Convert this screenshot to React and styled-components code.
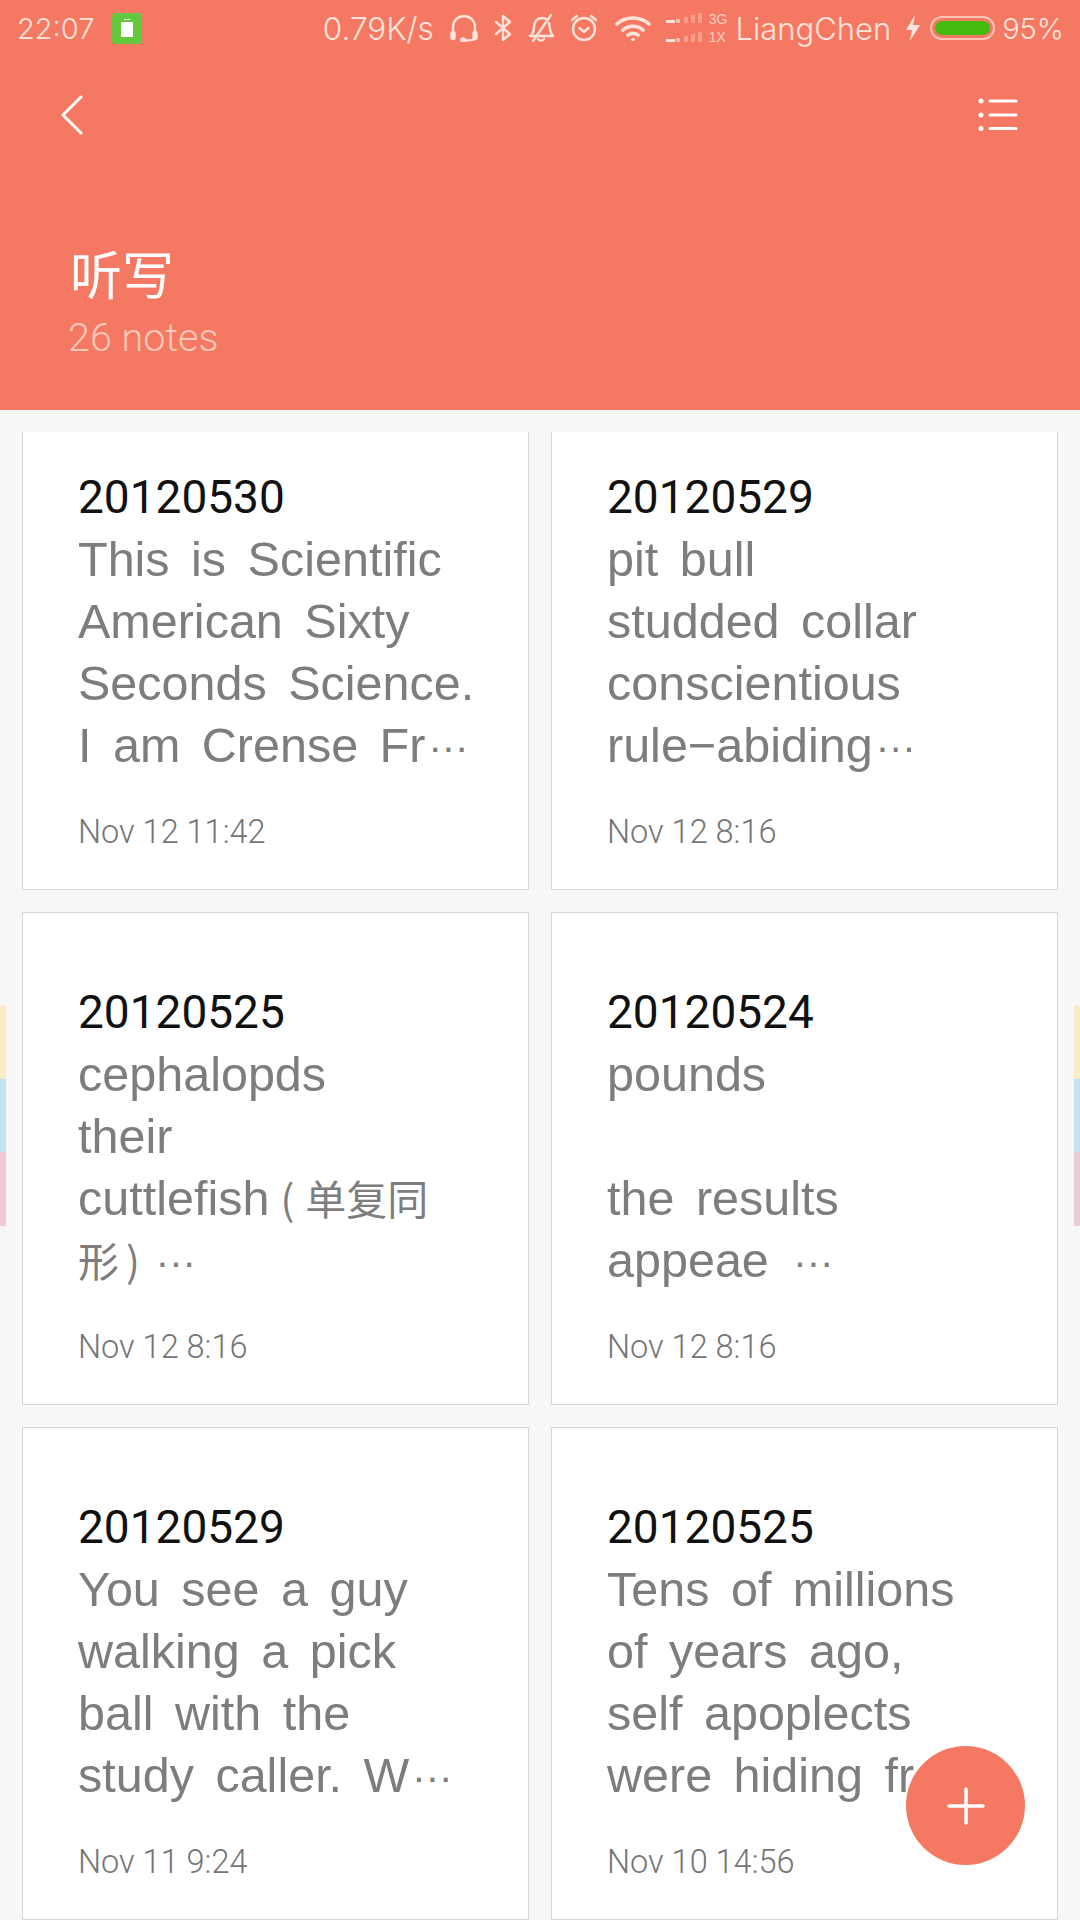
import React from 'react';
import styled, { createGlobalStyle } from 'styled-components';

const Global = createGlobalStyle`
  html, body { margin: 0; padding: 0; background: #f7f7f7; }
  #root { width: 1080px; height: 1920px; overflow: hidden; }
`;
const Page = styled.div`position: relative; width: 1080px; height: 1920px; overflow: hidden; background: #f7f7f7; font-family: "Liberation Sans", "Noto Sans CJK SC", sans-serif;`;
const Header = styled.header`height: 410px; background: #f57962; display: flex; flex-direction: column;`;
const StatusBar = styled.div`height: 56px; display: flex; align-items: center; padding: 0 16px 0 17px; color: #fde3dc; font-family: Inter, "Liberation Sans", sans-serif; font-size: 29px; font-weight: 300; white-space: nowrap;`;
const Time = styled.span`width: 95px;`;
const ChargeBadge = styled.span`width: 30px; height: 31px; background: #64c83c; border-radius: 4px; display: flex; align-items: center; justify-content: center;`;
const ChargeCell = styled.span`position: relative; width: 12px; height: 15px; margin-top: 3px; background: #fff; border-radius: 1px;
  &::before { content: ""; position: absolute; left: 3px; right: 3px; top: -3px; height: 1px; background: #fff; }
`;
const Spacer = styled.span`flex: 1;`;
const StatusItem = styled.span`display: flex; align-items: center; margin-left: ${p => p.$gap || 0}px; font-size: ${p => p.$size || 29}px;`;
const NetType = styled.span`display: flex; flex-direction: column; font-size: 14px; line-height: 18px; margin-left: 3px; color: #fbcdc1; font-family: "Liberation Sans", sans-serif;`;
const BatteryShell = styled.span`width: 65px; height: 24px; box-sizing: border-box; border: 2px solid #fcc4b7; border-radius: 12px; padding: 3px; display: flex;`;
const BatteryFill = styled.span`flex: 1; background: #45bb0f; border-radius: 8px;`;
const NavRow = styled.div`display: flex; justify-content: space-between; align-items: center; height: 118px; padding: 0 62px 0 60px; box-sizing: border-box;`;
const TitleBlock = styled.div`padding: 69px 0 0 68px; color: #fff;`;
const Title = styled.h1`margin: 0 0 13px 2px; font-size: 52px; line-height: 60px; font-weight: 400; font-family: "Noto Sans CJK SC", sans-serif;`;
const Count = styled.div`font-family: Roboto, sans-serif; font-weight: 300; font-size: 39.5px; line-height: 44px; color: #fcc8bb;`;
const Viewport = styled.main`margin-top: 22px; height: 1488px; overflow: hidden; padding: 0 22px;`;
const Grid = styled.div`display: grid; grid-template-columns: 507px 507px; column-gap: 22px; row-gap: 22px; margin-top: -35px;`;
const Card = styled.article`height: 493px; box-sizing: border-box; background: #fff; border: 1px solid #d6d6d6; padding: 68px 30px 0 55px; display: flex; flex-direction: column;`;
const NoteTitle = styled.div`font-family: Roboto, sans-serif; font-size: 46px; line-height: 62px; color: #111;`;
const NoteBody = styled.div`font-size: 48.5px; line-height: 62px; color: #7d7d7d; height: 248px; white-space: pre; word-spacing: 8px;`;
const Cjk = styled.span`font-family: "Noto Sans CJK SC", sans-serif; font-size: 41px; line-height: 0;`;
const Paren = styled.span`font-family: "Noto Sans CJK SC", sans-serif; font-size: 41px; line-height: 0; margin: ${p => (p.$open ? '0 11px' : '0 13px 0 7px')};`;
const Dots = styled.span`margin-left: 3px; font-size: 40px; vertical-align: 1px;`;
const NoteDate = styled.div`font-family: Roboto, sans-serif; font-weight: 300; font-size: 32.5px; line-height: 40px; color: #757575; margin-top: 36px;`;
const SideTab = styled.div`position: absolute; top: 1005px; ${p => p.$side}: 0; width: ${p => p.$w}px; display: flex; flex-direction: column;`;
const TabColor = styled.span`height: 73.5px; background: ${p => p.$c};`;
const Fab = styled.button`position: absolute; left: 906px; top: 1746px; width: 119px; height: 119px; border: 0; padding: 0; border-radius: 50%; background: #f57962; display: flex; align-items: center; justify-content: center;`;

const notes = [
  ['20120530', 'This is Scientific\nAmerican Sixty\nSeconds Science.\nI am Crense Fr\u22EF', 'Nov 12 11:42'],
  ['20120529', 'pit bull\nstudded collar\nconscientious\nrule\u2212abiding\u22EF', 'Nov 12 8:16'],
  ['20120525', 'cephalopds\ntheir\ncuttlefish(单复同\n形)\u22EF', 'Nov 12 8:16'],
  ['20120524', 'pounds\n\nthe results\nappeae \u22EF', 'Nov 12 8:16'],
  ['20120529', 'You see a guy\nwalking a pick\nball with the\nstudy caller. W\u22EF', 'Nov 11 9:24'],
  ['20120525', 'Tens of millions\nof years ago,\nself apoplects\nwere hiding fr\u22EF', 'Nov 10 14:56'],
];

const renderBody = (text) =>
  text.split(/(\u22EF|[\u4e00-\u9fff]+|[()])/).map((part, i) => {
    if (part === '\u22EF') return <Dots key={i}>{'\u00B7\u00B7\u00B7'}</Dots>;
    if (part === '(') return <Paren key={i} $open>{part}</Paren>;
    if (part === ')') return <Paren key={i}>{part}</Paren>;
    if (/[\u4e00-\u9fff]/.test(part)) return <Cjk key={i}>{part}</Cjk>;
    return part;
  });

const stroke = { fill: 'none', stroke: '#fde3dc', strokeWidth: 2.4, strokeLinecap: 'round', strokeLinejoin: 'round' };

const Headphones = () => (
  <svg width="28" height="28" viewBox="0 0 28 28" {...stroke}>
    <path d="M3 20V13a11 11 0 0 1 22 0v7" />
    <rect x="1.5" y="18" width="3" height="7" rx="1.5" fill="#fde3dc" />
    <rect x="23.5" y="18" width="3" height="7" rx="1.5" fill="#fde3dc" />
    <path d="M25 25c-3 1.5-6 1.5-10 1.5" /><circle cx="13" cy="26" r="1.6" fill="#fde3dc" />
  </svg>
);
const Bluetooth = () => (
  <svg width="18" height="28" viewBox="0 0 18 28" {...stroke}>
    <path d="M2 8l14 12-7 6V2l7 6L2 20" />
  </svg>
);
const BellOff = () => (
  <svg width="28" height="30" viewBox="0 0 28 30" {...stroke}>
    <path d="M3 23c3-2 4-5 4-9 0-5 3-9 8-9 2 0 3.500 .5 5 1.500M22 10c1 6 1 10 4 13H3M11 26c1 2 5 2 6 0" />
    <path d="M24 2L6 28" />
  </svg>
);
const Alarm = () => (
  <svg width="28" height="30" viewBox="0 0 28 30" {...stroke}>
    <circle cx="14" cy="16" r="11" /><path d="M9.500 15l4.500 4 4.500-4M2 7l5-4M26 7l-5-4" />
  </svg>
);
const Wifi = () => (
  <svg width="36" height="28" viewBox="0 0 36 28" fill="none" stroke="#fde3dc" strokeWidth="3.600" strokeLinecap="round">
    <path d="M2 10c9-8 23-8 32 0M8 16c6-5 14-5 20 0M13 21c3-2 7-2 10 0" />
    <circle cx="18" cy="25.500" r="1.800" fill="#fde3dc" stroke="none" />
  </svg>
);
const Signal = () => (
  <svg width="40" height="30" viewBox="0 0 40 30">
    <rect x="0" y="7" width="9" height="3" fill="#fde3dc" /><rect x="10" y="6" width="4" height="4" fill="#fbb9aa" />
    <rect x="18" y="4" width="4" height="6" fill="#fa9d8a" /><rect x="25" y="2" width="4" height="8" fill="#fa9d8a" /><rect x="32" y="0" width="4" height="10" fill="#fa9d8a" />
    <rect x="0" y="26" width="9" height="3" fill="#fde3dc" /><rect x="10" y="25" width="4" height="4" fill="#fbb9aa" />
    <rect x="18" y="23" width="4" height="6" fill="#fa9d8a" /><rect x="25" y="21" width="4" height="8" fill="#fa9d8a" /><rect x="32" y="19" width="4" height="10" fill="#fa9d8a" />
  </svg>
);
const Bolt = () => (
  <svg width="16" height="26" viewBox="0 0 16 26"><path d="M10 0L1 15h6l-2 11 10-16H8z" fill="#fde3dc" /></svg>
);
const Back = () => (
  <svg width="24" height="40" viewBox="0 0 24 40" fill="none" stroke="#fff" strokeWidth="3" strokeLinecap="round" strokeLinejoin="round">
    <path d="M21 2L3 20l18 18" />
  </svg>
);
const ListIcon = () => (
  <svg width="40" height="36" viewBox="0 0 40 36" fill="none" stroke="#fff" strokeWidth="3" strokeLinecap="round">
    <circle cx="3" cy="4" r="2.500" fill="#fff" stroke="none" /><circle cx="3" cy="18" r="2.500" fill="#fff" stroke="none" /><circle cx="3" cy="31.500" r="2.500" fill="#fff" stroke="none" />
    <path d="M12 4h26M12 18h26M12 31.500h26" />
  </svg>
);
const Plus = () => (
  <svg width="38" height="38" viewBox="0 0 38 38" stroke="#fff" strokeWidth="3.500" strokeLinecap="round"><path d="M19 2v34M2 19h34" /></svg>
);

export default function App() {
  return (
    <Page>
      <Global />
      <Header>
        <StatusBar>
          <Time>22:07</Time>
          <ChargeBadge><ChargeCell /></ChargeBadge>
          <Spacer />
          <StatusItem $size={31.5}>0.79K/s</StatusItem>
          <StatusItem $gap={16}><Headphones /></StatusItem>
          <StatusItem $gap={16}><Bluetooth /></StatusItem>
          <StatusItem $gap={15}><BellOff /></StatusItem>
          <StatusItem $gap={15}><Alarm /></StatusItem>
          <StatusItem $gap={17}><Wifi /></StatusItem>
          <StatusItem $gap={15}><Signal /></StatusItem>
          <NetType><span>3G</span><span>1X</span></NetType>
          <StatusItem $gap={8} $size={31}>LiangChen</StatusItem>
          <StatusItem $gap={14}><Bolt /></StatusItem>
          <StatusItem $gap={9}><BatteryShell><BatteryFill /></BatteryShell></StatusItem>
          <StatusItem $gap={7}>95%</StatusItem>
        </StatusBar>
        <NavRow><Back /><ListIcon /></NavRow>
        <TitleBlock>
          <Title>听写</Title>
          <Count>26 notes</Count>
        </TitleBlock>
      </Header>
      <Viewport>
        <Grid>
          {notes.map(([t, b, d], i) => (
            <Card key={i}>
              <NoteTitle>{t}</NoteTitle>
              <NoteBody>{renderBody(b)}</NoteBody>
              <NoteDate>{d}</NoteDate>
            </Card>
          ))}
        </Grid>
      </Viewport>
      <SideTab $side="left" $w={6}><TabColor $c="#f9edc8" /><TabColor $c="#c5e0f0" /><TabColor $c="#eccbd8" /></SideTab>
      <SideTab $side="right" $w={6}><TabColor $c="#f9edc8" /><TabColor $c="#c5e0f0" /><TabColor $c="#eccbd8" /></SideTab>
      <Fab aria-label="New note"><Plus /></Fab>
    </Page>
  );
}
